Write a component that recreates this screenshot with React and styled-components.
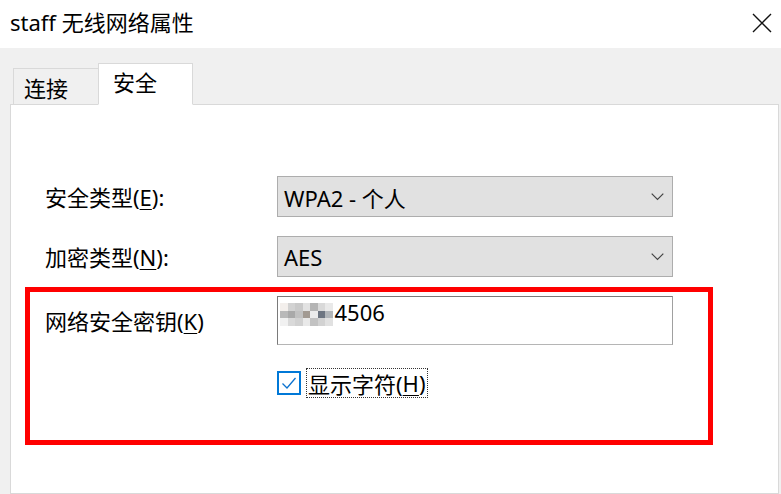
import React from 'react'
import styled, { createGlobalStyle } from 'styled-components'

const GlobalStyle = createGlobalStyle`
  html, body {
    margin: 0;
    padding: 0;
    background: #f0f0f0;
  }
  body {
    font-family: "Noto Sans", "Noto Sans CJK SC", sans-serif;
    color: #000;
  }
`

const mosaic = [
  ['#f3efec', '#d2d2d2', '#c9c9c9', '#e2e2e2', '#b4b4b4', '#d9d9d9', '#e9e9e9'],
  ['#b9b9b9', '#a9a9a9', '#c1c1c1', '#a29a92', '#ececec', '#6d7581', '#b1b5b9'],
  ['#f1f1f1', '#d9d9d9', '#d1d1d1', '#e9e9e9', '#c2c2c2', '#d2d2d2', '#e1e1e1'],
]

const App = () => {
  return (
    <Window>
      <GlobalStyle />
      <TitleBar>
        <Title>staff 无线网络属性</Title>
        <CloseButton aria-label="close">
          <svg width="20" height="20" viewBox="0 0 20 20">
            <path d="M1 1 L19 19 M19 1 L1 19" stroke="#111" strokeWidth="1.4" fill="none" />
          </svg>
        </CloseButton>
      </TitleBar>

      <Body>
        <TabRow>
          <Tab>连接</Tab>
          <Tab active>安全</Tab>
        </TabRow>

        <Panel>
          <FormGrid>
            <Label>安全类型(<u>E</u>):</Label>
            <Select>
              <span>WPA2 - 个人</span>
              <Chevron />
            </Select>

            <Label>加密类型(<u>N</u>):</Label>
            <Select>
              <span>AES</span>
              <Chevron />
            </Select>
          </FormGrid>

          <Highlight>
            <FormGrid>
              <Label>网络安全密钥(<u>K</u>)</Label>
              <KeyInput>
                <Mosaic>
                  {mosaic.map((row, r) =>
                    row.map((c, i) => <Cell key={r + '-' + i} style={{ background: c }} />)
                  )}
                </Mosaic>
                <span>4506</span>
              </KeyInput>

              <span />
              <CheckRow>
                <CheckBox>
                  <svg width="16" height="14" viewBox="0 0 16 14">
                    <path d="M1.5 7.5 L6 12 L14.5 2" stroke="#0b72cf" strokeWidth="1.3" fill="none" />
                  </svg>
                </CheckBox>
                <FocusLabel>显示字符(<u>H</u>)</FocusLabel>
              </CheckRow>
            </FormGrid>
          </Highlight>
        </Panel>
      </Body>
    </Window>
  )
}

const Chevron = () => (
  <ChevronIcon width="13" height="8" viewBox="0 0 13 8">
    <path d="M0.7 0.7 L6.5 6.5 L12.3 0.7" stroke="#444" strokeWidth="1.2" fill="none" />
  </ChevronIcon>
)

const Window = styled.div`
  width: 781px;
  height: 494px;
  overflow: hidden;
  display: flex;
  flex-direction: column;
  background: #f0f0f0;
`

const TitleBar = styled.div`
  height: 48px;
  flex-shrink: 0;
  background: #fff;
  display: flex;
  align-items: center;
  justify-content: space-between;
  padding: 0 9px 4px 10px;
  box-sizing: border-box;
`

const Title = styled.div`
  font-size: 22px;
  line-height: 1;
`

const CloseButton = styled.div`
  width: 20px;
  height: 20px;
  display: flex;
  margin-top: 2px;
`

const Body = styled.div`
  flex: 1;
  display: flex;
  flex-direction: column;
  padding: 15px 2px 0 10px;
`

const TabRow = styled.div`
  display: flex;
  align-items: flex-end;
  padding-left: 3px;
  position: relative;
  z-index: 1;
  margin-bottom: -1px;
`

const Tab = styled.div`
  box-sizing: border-box;
  display: flex;
  align-items: center;
  font-size: 22px;
  border: 1px solid #d9d9d9;
  background: ${p => (p.active ? '#fff' : '#f0f0f0')};
  height: ${p => (p.active ? '42px' : '37px')};
  width: ${p => (p.active ? '95px' : '86px')};
  padding: ${p => (p.active ? '0 0 6px 14px' : '0 0 0 10px')};
  margin-left: ${p => (p.active ? '-1px' : '0')};
  border-bottom: ${p => (p.active ? '1px solid #fff' : '1px solid #d9d9d9')};
  border-right: ${p => (p.active ? '1px solid #d9d9d9' : 'none')};
`

const Panel = styled.div`
  flex: 1;
  background: #fff;
  border: 1px solid #d9d9d9;
  padding: 71px 0 0 34px;
`

const FormGrid = styled.div`
  display: grid;
  grid-template-columns: 232px 396px;
  row-gap: 19px;
  align-items: center;
`

const Label = styled.div`
  font-size: 22px;
  line-height: 1;

  u {
    text-underline-offset: 3px;
    text-decoration-thickness: 1px;
  }
`

const Select = styled.div`
  box-sizing: border-box;
  height: 41px;
  background: #e1e1e1;
  border: 1px solid #adadad;
  display: flex;
  align-items: center;
  justify-content: space-between;
  padding: 0 8px 0 6px;
  font-size: 22px;
`

const ChevronIcon = styled.svg`
  display: block;
`

const Highlight = styled.div`
  box-sizing: border-box;
  width: 688px;
  margin: 10px 0 0 -20px;
  border: 5px solid #ff0000;
  padding: 4px 0 42px 15px;

  ${FormGrid} {
    row-gap: 23px;
  }
`

const KeyInput = styled.div`
  box-sizing: border-box;
  height: 49px;
  border: 1px solid #7a7a7a;
  border-bottom-color: #b5b5b5;
  border-right-color: #a0a0a0;
  background: #fff;
  display: flex;
  align-items: flex-start;
  padding: 3px 0 0 2px;
  font-size: 22px;
  line-height: 1.15;

  span {
    margin-left: 2px;
  }
`

const Mosaic = styled.div`
  display: grid;
  grid-template-columns: repeat(7, 7.5px);
  grid-template-rows: repeat(3, 7.5px);
  margin-top: 3px;
`

const Cell = styled.div``

const CheckRow = styled.div`
  display: flex;
  align-items: center;
  gap: 5px;
`

const CheckBox = styled.div`
  box-sizing: border-box;
  width: 24px;
  height: 24px;
  border: 2px solid #0078d7;
  background: #fff;
  display: flex;
  align-items: center;
  justify-content: center;
`

const FocusLabel = styled.div`
  box-sizing: border-box;
  height: 30px;
  border: 1px dotted #333;
  padding: 0 1px;
  display: flex;
  align-items: center;
  font-size: 22px;

  u {
    text-underline-offset: 3px;
    text-decoration-thickness: 1px;
  }
`

export default App
